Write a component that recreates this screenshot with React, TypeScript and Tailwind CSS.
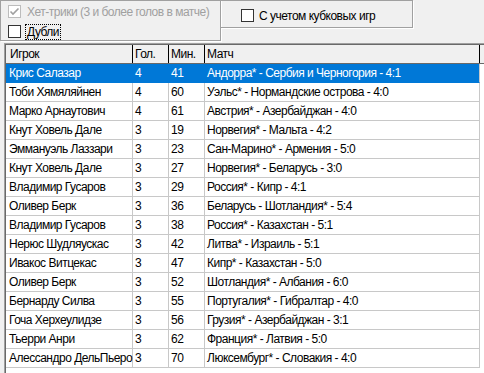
import React from "react";

const rows: [string, string, string, string][] = [
  ["Крис Салазар", "4", "41", "Андорра* - Сербия и Черногория - 4:1"],
  ["Тоби Хямяляйнен", "4", "60", "Уэльс* - Нормандские острова - 4:0"],
  ["Марко Арнаутович", "4", "61", "Австрия* - Азербайджан - 4:0"],
  ["Кнут Ховель Дале", "3", "19", "Норвегия* - Мальта - 4:2"],
  ["Эммануэль Лаззари", "3", "23", "Сан-Марино* - Армения - 5:0"],
  ["Кнут Ховель Дале", "3", "27", "Норвегия* - Беларусь - 3:0"],
  ["Владимир Гусаров", "3", "29", "Россия* - Кипр - 4:1"],
  ["Оливер Берк", "3", "36", "Беларусь - Шотландия* - 5:4"],
  ["Владимир Гусаров", "3", "38", "Россия* - Казахстан - 5:1"],
  ["Нерюс Шудляускас", "3", "42", "Литва* - Израиль - 5:1"],
  ["Ивакос Витцекас", "3", "47", "Кипр* - Казахстан - 5:0"],
  ["Оливер Берк", "3", "52", "Шотландия* - Албания - 6:0"],
  ["Бернарду Силва", "3", "55", "Португалия* - Гибралтар - 4:0"],
  ["Гоча Херхеулидзе", "3", "56", "Грузия* - Азербайджан - 3:1"],
  ["Тьерри Анри", "3", "62", "Франция* - Латвия - 5:0"],
  ["Алессандро ДельПьеро", "3", "70", "Люксембург* - Словакия - 4:0"],
];

function Box({ checked, disabled }: { checked?: boolean; disabled?: boolean }) {
  return (
    <span
      className={
        "w-[13px] h-[13px] shrink-0 border bg-white flex items-center justify-center " +
        (disabled ? "border-[#bcbcbc]" : "border-[#333333]")
      }
    >
      {checked && (
        <svg width="11" height="11" viewBox="0 0 11 11">
          <polyline
            points="1.5,5.5 4,8 9.5,2.5"
            fill="none"
            stroke={disabled ? "#a0a0a0" : "#333"}
            strokeWidth="1.6"
          />
        </svg>
      )}
    </span>
  );
}

export default function App() {
  return (
    <div className="w-[484px] h-[373px] overflow-hidden bg-[#f0f0f0] text-[12px] leading-[14px] tracking-[-0.5px] text-black font-['Liberation_Sans',Arial,sans-serif]">
      <div className="flex items-start h-[43px]">
        <div className="w-[221px] h-[41px] border border-[#a0a0a0] shadow-[1px_1px_0_#ffffff] flex flex-col pl-[7px] pt-[4px] gap-[7px]">
          <div className="flex items-center h-[13px]">
            <Box checked disabled />
            <span className="ml-[6px] text-[#a0a0a0] whitespace-nowrap">
              Хет-трики (3 и более голов в матче)
            </span>
          </div>
          <div className="flex items-center h-[13px]">
            <Box />
            <span className="ml-[5px] px-[1px] outline-1 outline-dotted outline-black whitespace-nowrap">
              Дубли
            </span>
          </div>
        </div>
        <div className="-ml-px w-[193px] h-[28px] border border-[#a0a0a0] shadow-[1px_1px_0_#ffffff] flex items-start pl-[20px] pt-[8px]">
          <Box />
          <span className="ml-[5px] whitespace-nowrap">С учетом кубковых игр</span>
        </div>
      </div>
      <div className="ml-[4px] w-[600px] h-[330px] border-t border-l border-[#a0a0a0] bg-white">
        <div className="h-full border-t border-l border-[#696969] flex flex-col">
          <div className="flex h-[19px] border-b border-[#696969] bg-[#f0f0f0] shrink-0">
            {[
              ["Игрок", "w-[127px] pl-[4px]"],
              ["Гол.", "w-[36px] pl-[2px]"],
              ["Мин.", "w-[36px] pl-[2px]"],
              ["Матч", "w-[275px] pl-[2px]"],
            ].map(([t, c]) => (
              <div
                key={t}
                className={c + " h-full border-r border-[#000000] flex items-center whitespace-nowrap overflow-hidden"}
              >
                {t}
              </div>
            ))}
            <div className="flex-1" />
          </div>
          {rows.map((r, i) => {
            const sel = i === 0;
            const cell =
              "h-full border-r border-b flex items-center whitespace-nowrap " +
              (sel ? "border-[#0078d7]" : "border-[#c8c8c8]");
            return (
              <div
                key={i}
                className={"flex h-[19px] shrink-0 w-[474px] " + (sel ? "bg-[#0078d7] text-white" : "")}
              >
                <div className={cell + " w-[127px] pl-[3px] overflow-visible"}>{r[0]}</div>
                <div className={cell + " w-[36px] pl-[2px] overflow-hidden"}>{r[1]}</div>
                <div className={cell + " w-[36px] pl-[2px] overflow-hidden"}>{r[2]}</div>
                <div className={cell + " w-[275px] pl-[2px] overflow-hidden border-r-[#c8c8c8]"}>{r[3]}</div>
              </div>
            );
          })}
        </div>
      </div>
    </div>
  );
}
